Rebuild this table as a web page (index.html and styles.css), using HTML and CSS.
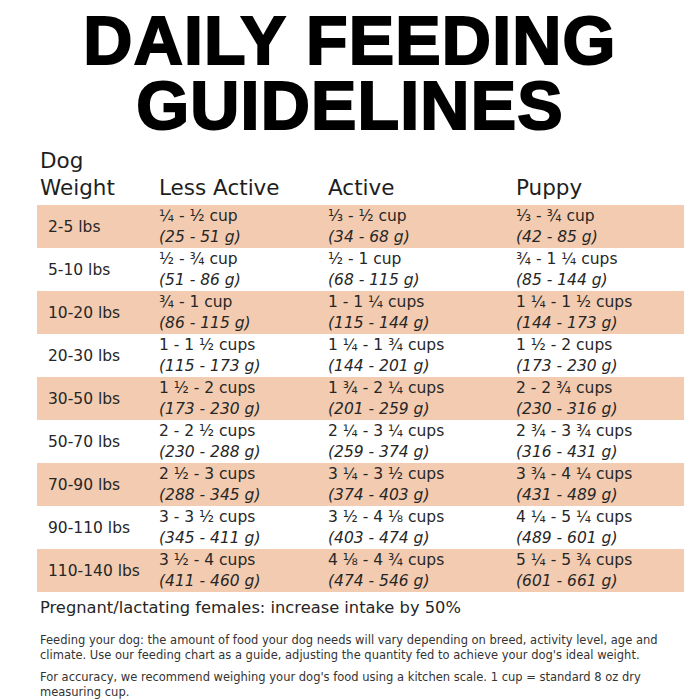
FILE: index.html
```html
<!DOCTYPE html>
<html>
<head>
<meta charset="utf-8">
<link rel="stylesheet" href="styles.css">
</head>
<body>
<div class="page">
  <h1 class="title"><span class="tl">DAILY FEEDING</span><span class="tl">GUIDELINES</span></h1>
  <div class="table">
    <div class="head">
      <div class="hc">Dog<br>Weight</div>
      <div class="hc">Less Active</div>
      <div class="hc">Active</div>
      <div class="hc">Puppy</div>
    </div>
    <div class="row shade"><div class="w">2-5 lbs</div><div class="c">¼ - ½ cup<i>(25 - 51 g)</i></div><div class="c">⅓ - ½ cup<i>(34 - 68 g)</i></div><div class="c">⅓ - ¾ cup<i>(42 - 85 g)</i></div></div>
    <div class="row"><div class="w">5-10 lbs</div><div class="c">½ - ¾ cup<i>(51 - 86 g)</i></div><div class="c">½ - 1 cup<i>(68 - 115 g)</i></div><div class="c">¾ - 1 ¼ cups<i>(85 - 144 g)</i></div></div>
    <div class="row shade"><div class="w">10-20 lbs</div><div class="c">¾ - 1 cup<i>(86 - 115 g)</i></div><div class="c">1 - 1 ¼ cups<i>(115 - 144 g)</i></div><div class="c">1 ¼ - 1 ½ cups<i>(144 - 173 g)</i></div></div>
    <div class="row"><div class="w">20-30 lbs</div><div class="c">1 - 1 ½ cups<i>(115 - 173 g)</i></div><div class="c">1 ¼ - 1 ¾ cups<i>(144 - 201 g)</i></div><div class="c">1 ½ - 2 cups<i>(173 - 230 g)</i></div></div>
    <div class="row shade"><div class="w">30-50 lbs</div><div class="c">1 ½ - 2 cups<i>(173 - 230 g)</i></div><div class="c">1 ¾ - 2 ¼ cups<i>(201 - 259 g)</i></div><div class="c">2 - 2 ¾ cups<i>(230 - 316 g)</i></div></div>
    <div class="row"><div class="w">50-70 lbs</div><div class="c">2 - 2 ½ cups<i>(230 - 288 g)</i></div><div class="c">2 ¼ - 3 ¼ cups<i>(259 - 374 g)</i></div><div class="c">2 ¾ - 3 ¾ cups<i>(316 - 431 g)</i></div></div>
    <div class="row shade"><div class="w">70-90 lbs</div><div class="c">2 ½ - 3 cups<i>(288 - 345 g)</i></div><div class="c">3 ¼ - 3 ½ cups<i>(374 - 403 g)</i></div><div class="c">3 ¾ - 4 ¼ cups<i>(431 - 489 g)</i></div></div>
    <div class="row"><div class="w">90-110 lbs</div><div class="c">3 - 3 ½ cups<i>(345 - 411 g)</i></div><div class="c">3 ½ - 4 ⅛ cups<i>(403 - 474 g)</i></div><div class="c">4 ¼ - 5 ¼ cups<i>(489 - 601 g)</i></div></div>
    <div class="row shade"><div class="w">110-140 lbs</div><div class="c">3 ½ - 4 cups<i>(411 - 460 g)</i></div><div class="c">4 ⅛ - 4 ¾ cups<i>(474 - 546 g)</i></div><div class="c">5 ¼ - 5 ¾ cups<i>(601 - 661 g)</i></div></div>
  </div>
  <p class="note">Pregnant/lactating females: increase intake by 50%</p>
  <p class="small">Feeding your dog: the amount of food your dog needs will vary depending on breed, activity level, age and climate. Use our feeding chart as a guide, adjusting the quantity fed to achieve your dog's ideal weight.</p>
  <p class="small">For accuracy, we recommend weighing your dog's food using a kitchen scale. 1 cup = standard 8 oz dry measuring cup.</p>
</div>
</body>
</html>
```
FILE: styles.css
```css
html, body {
  margin: 0;
  padding: 0;
  background: #ffffff;
}
.page {
  width: 700px;
  height: 700px;
  overflow: hidden;
  font-family: "DejaVu Sans", Verdana, sans-serif;
  font-weight: 400;
  color: #262626;
}
.title {
  margin: 0;
  padding-top: 8px;
  text-align: center;
  font-family: "Liberation Sans", Arial, sans-serif;
  font-weight: 700;
  font-size: 68px;
  letter-spacing: 1.2px;
  -webkit-text-stroke: 2px #000;
  color: #000;
}
.tl {
  display: block;
  height: 65px;
  line-height: 65px;
}
.table {
  margin: 9px 16px 0 37px;
}
.head {
  display: grid;
  grid-template-columns: 122px 169px 188px 1fr;
  align-items: end;
  font-size: 21.5px;
  line-height: 27px;
  padding-bottom: 4px;
  color: #1e1e1e;
}
.head .hc:first-child {
  padding-left: 3px;
}
.row {
  display: grid;
  grid-template-columns: 122px 169px 188px 1fr;
  align-items: center;
  height: 43px;
  font-size: 15.5px;
}
.row.shade {
  background: #f2cbb0;
}
.w {
  padding-left: 11px;
}
.c {
  line-height: 21px;
}
.c i {
  display: block;
}
.note {
  margin: 6px 0 0 40px;
  font-size: 16.3px;
  line-height: 20px;
}
.small {
  margin: 15px 20px 0 40px;
  font-size: 11.5px;
  line-height: 15px;
  color: #333;
}
.small + .small {
  margin-top: 7px;
}
```
